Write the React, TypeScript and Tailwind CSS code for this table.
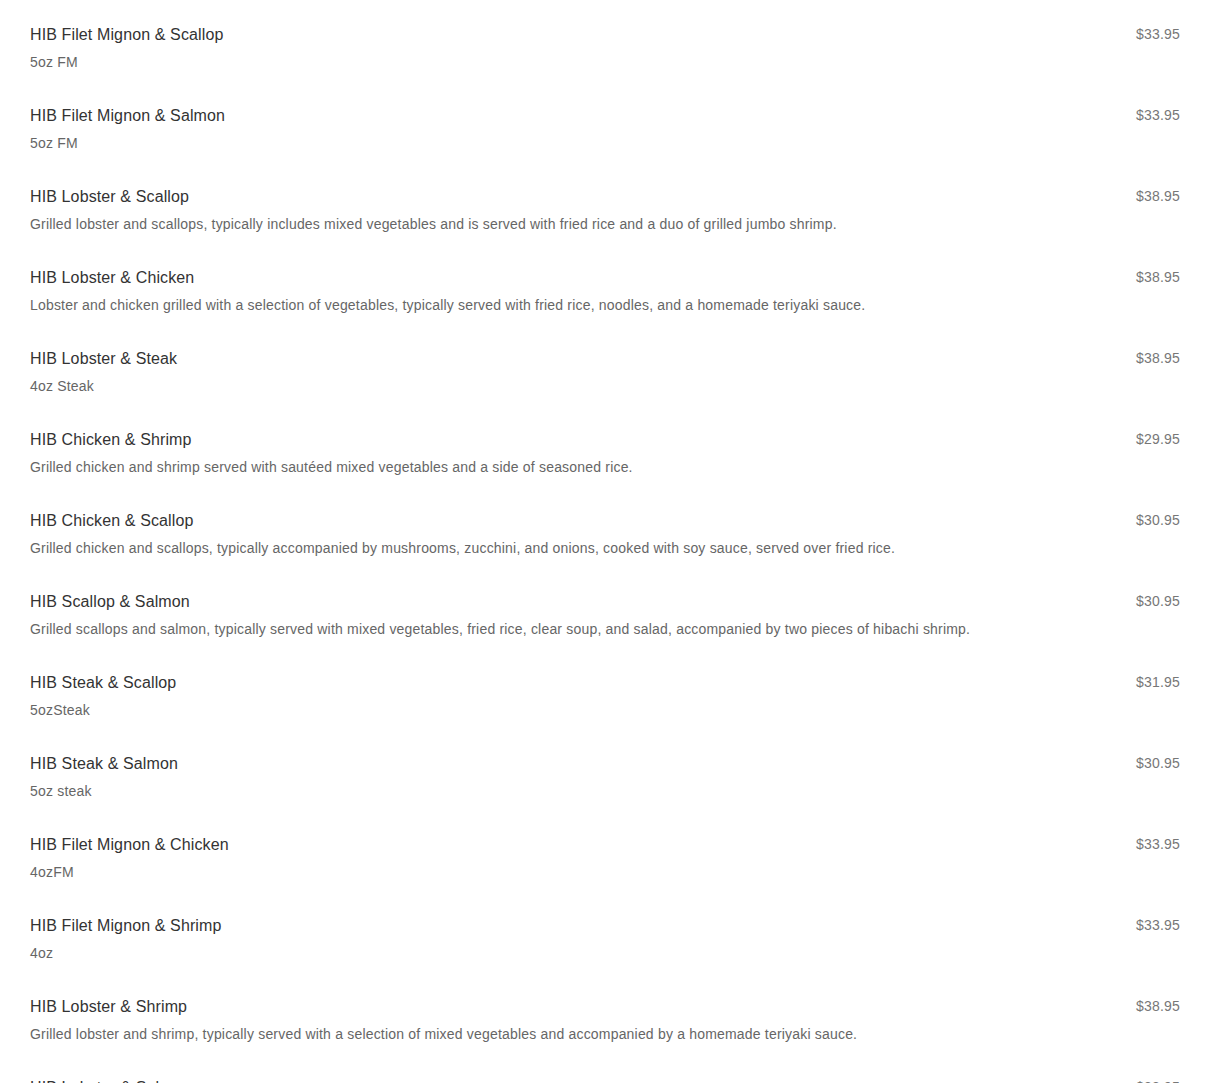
const items = [
  { name: "HIB Filet Mignon & Scallop", desc: "5oz FM", price: "$33.95" },
  { name: "HIB Filet Mignon & Salmon", desc: "5oz FM", price: "$33.95" },
  {
    name: "HIB Lobster & Scallop",
    desc: "Grilled lobster and scallops, typically includes mixed vegetables and is served with fried rice and a duo of grilled jumbo shrimp.",
    price: "$38.95",
  },
  {
    name: "HIB Lobster & Chicken",
    desc: "Lobster and chicken grilled with a selection of vegetables, typically served with fried rice, noodles, and a homemade teriyaki sauce.",
    price: "$38.95",
  },
  { name: "HIB Lobster & Steak", desc: "4oz Steak", price: "$38.95" },
  {
    name: "HIB Chicken & Shrimp",
    desc: "Grilled chicken and shrimp served with sautéed mixed vegetables and a side of seasoned rice.",
    price: "$29.95",
  },
  {
    name: "HIB Chicken & Scallop",
    desc: "Grilled chicken and scallops, typically accompanied by mushrooms, zucchini, and onions, cooked with soy sauce, served over fried rice.",
    price: "$30.95",
  },
  {
    name: "HIB Scallop & Salmon",
    desc: "Grilled scallops and salmon, typically served with mixed vegetables, fried rice, clear soup, and salad, accompanied by two pieces of hibachi shrimp.",
    price: "$30.95",
  },
  { name: "HIB Steak & Scallop", desc: "5ozSteak", price: "$31.95" },
  { name: "HIB Steak & Salmon", desc: "5oz steak", price: "$30.95" },
  { name: "HIB Filet Mignon & Chicken", desc: "4ozFM", price: "$33.95" },
  { name: "HIB Filet Mignon & Shrimp", desc: "4oz", price: "$33.95" },
  {
    name: "HIB Lobster & Shrimp",
    desc: "Grilled lobster and shrimp, typically served with a selection of mixed vegetables and accompanied by a homemade teriyaki sauce.",
    price: "$38.95",
  },
  { name: "HIB Lobster & Salmon", desc: "5oz FM", price: "$38.95" },
];

export default function App() {
  return (
    <div className="h-[1083px] overflow-hidden bg-white px-[30px] pt-[7px] font-['Liberation_Sans',Arial,sans-serif]">
      {items.map((item) => (
        <MenuRow key={item.name} {...item} />
      ))}
    </div>
  );
}

function MenuRow({ name, desc, price }: { name: string; desc: string; price: string }) {
  return (
    <div className="flex justify-between gap-6 py-4">
      <div>
        <div className="text-base leading-6 tracking-[0.12px] text-[#333]">{name}</div>
        <div className="mt-[5px] text-sm leading-5 tracking-[0.19px] text-[#666]">{desc}</div>
      </div>
      <div className="mt-px shrink-0 text-sm leading-5 tracking-[0.2px] text-[#777]">{price}</div>
    </div>
  );
}
